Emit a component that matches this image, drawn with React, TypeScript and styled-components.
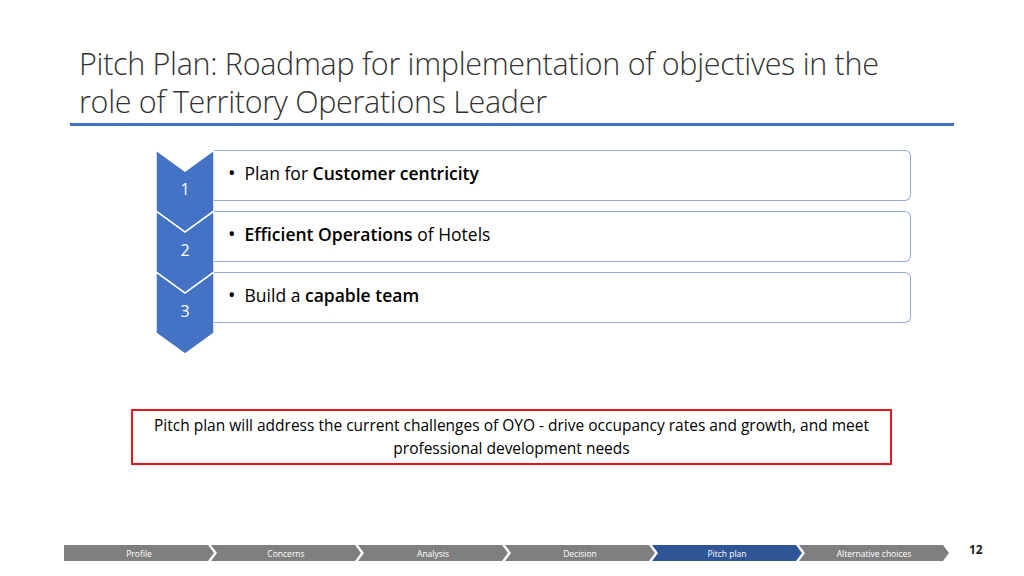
import React from 'react';
import styled, { createGlobalStyle } from 'styled-components';

const Global = createGlobalStyle`
  body { margin: 0; background: #fff; font-family: "Open Sans", "Liberation Sans", sans-serif; }
`;

const Slide = styled.div`
  width: 1024px;
  height: 576px;
  position: relative;
  overflow: hidden;
  display: flex;
  flex-direction: column;
`;

const Title = styled.h1`
  margin: 44px 0 0 79px;
  font-family: "Open Sans", sans-serif;
  font-weight: 300;
  font-size: 30.5px;
  line-height: 38px;
  color: #333;
  letter-spacing: -0.3px;
  white-space: nowrap;
`;

const Rule = styled.div`
  margin: 3px 0 0 70px;
  width: 884px;
  height: 3px;
  background: #4472c4;
`;

const Steps = styled.div`
  margin: 24px 0 0 156px;
  display: flex;
  position: relative;
  height: 205px;
`;

const ChevronCol = styled.svg`
  width: 58px;
  height: 205px;
  flex: none;
`;

const Rows = styled.div`
  display: flex;
  flex-direction: column;
  gap: 10px;
`;

const Row = styled.div`
  width: 697px;
  height: 51px;
  box-sizing: border-box;
  border: 1px solid #8faadc;
  border-left: none;
  border-radius: 0 6px 6px 0;
  display: flex;
  align-items: center;
  padding: 0 0 6px 14px;
  font-family: "Open Sans", sans-serif;
  font-size: 17.5px;
  color: #000;
  b { font-weight: 600; }
`;

const Bullet = styled.span`
  margin-right: 9px;
  font-size: 20px;
`;

const Callout = styled.div`
  margin: 54px 0 0 131px;
  width: 761px;
  height: 56px;
  box-sizing: border-box;
  border: 2px solid #e8161b;
  display: flex;
  align-items: center;
  justify-content: center;
  text-align: center;
  font-size: 15.5px;
  line-height: 23px;
  color: #000;
  padding: 0 14px;
`;

const Nav = styled.div`
  position: absolute;
  left: 64px;
  top: 545px;
  display: flex;
`;

const Seg = styled.div<{ $active?: boolean; $first?: boolean }>`
  width: 150px;
  height: 16px;
  margin-right: -4px;
  background: ${p => (p.$active ? '#2f5597' : '#7f7f7f')};
  color: #fff;
  font-size: 8.5px;
  display: flex;
  align-items: center;
  justify-content: center;
  clip-path: ${p =>
    p.$first
      ? 'polygon(0 0, calc(100% - 6px) 0, 100% 50%, calc(100% - 6px) 100%, 0 100%)'
      : 'polygon(0 0, calc(100% - 6px) 0, 100% 50%, calc(100% - 6px) 100%, 0 100%, 6px 50%)'};
`;

const Gap = styled.div`
  width: 1px;
`;

const PageNo = styled.div`
  position: absolute;
  left: 969px;
  top: 541px;
  font-size: 12px;
  font-weight: 700;
  color: #222;
`;

const steps = [
  <>Plan for <b>Customer centricity</b></>,
  <><b>Efficient Operations</b> of Hotels</>,
  <>Build a <b>capable team</b></>,
];

const nav = ['Profile', 'Concerns', 'Analysis', 'Decision', 'Pitch plan', 'Alternative choices'];

export default function App() {
  return (
    <Slide>
      <Global />
      <Title>
        Pitch Plan: Roadmap for implementation of objectives in the
        <br />
        role of Territory Operations Leader
      </Title>
      <Rule />
      <Steps>
        <ChevronCol viewBox="0 0 58 205">
          {[0, 61, 122].map((y, i) => (
            <g key={i}>
              <polygon
                points={`0,${y} 29,${y + 21} 58,${y} 58,${y + 61} 29,${y + 82} 0,${y + 61}`}
                fill="#4472c4"
                stroke="#fff"
                strokeWidth="1.5"
              />
              <text x="29" y={y + 45} fill="#fff" fontSize="16" textAnchor="middle" fontFamily="Open Sans, sans-serif">
                {i + 1}
              </text>
            </g>
          ))}
        </ChevronCol>
        <Rows>
          {steps.map((s, i) => (
            <Row key={i}>
              <Bullet>•</Bullet>
              <span>{s}</span>
            </Row>
          ))}
        </Rows>
      </Steps>
      <Callout>
        Pitch plan will address the current challenges of OYO - drive occupancy rates and growth, and meet professional development needs
      </Callout>
      <Nav>
        {nav.map((n, i) => (
          <React.Fragment key={n}>
            <Seg $first={i === 0} $active={n === 'Pitch plan'}>{n}</Seg>
            {i < nav.length - 1 && <Gap />}
          </React.Fragment>
        ))}
      </Nav>
      <PageNo>12</PageNo>
    </Slide>
  );
}
